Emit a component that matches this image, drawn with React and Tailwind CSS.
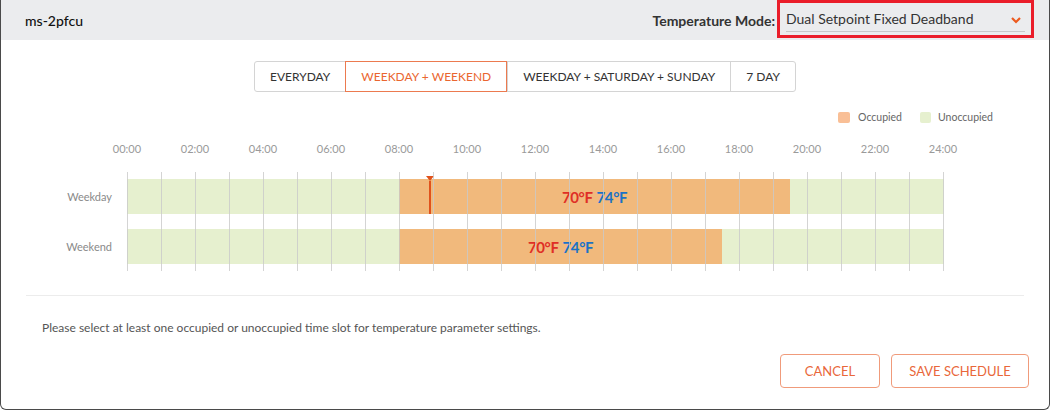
import React, { useState } from "react";

const HOUR = 34;
const TABS = ["EVERYDAY", "WEEKDAY + WEEKEND", "WEEKDAY + SATURDAY + SUNDAY", "7 DAY"];
const TICKS = ["00:00", "02:00", "04:00", "06:00", "08:00", "10:00", "12:00", "14:00", "16:00", "18:00", "20:00", "22:00", "24:00"];

const ROWS = [
  { label: "Weekday", start: 8, end: 19.5, marker: 8.9 },
  { label: "Weekend", start: 8, end: 17.5 },
];

function ScheduleBar({ row }) {
  const before = row.start * HOUR;
  const occupied = (row.end - row.start) * HOUR;
  return (
    <div className="relative flex h-[35px]">
      <div className="bg-[#e6f0cf]" style={{ width: before }} />
      <div
        className="flex items-center justify-center bg-[#f1b97c] text-[15px] font-bold tracking-tight"
        style={{ width: occupied }}
      >
        <span className="text-[#df2f26]">70°F</span>
        <span className="ml-1 text-[#1a72c6]">74°F</span>
      </div>
      <div className="flex-1 bg-[#e6f0cf]" />
      {row.marker && (
        <div
          className="absolute top-[-3px] bottom-0 flex flex-col items-center"
          style={{ left: row.marker * HOUR - 4 }}
        >
          <div className="h-0 w-0 border-x-[4px] border-t-[5px] border-x-transparent border-t-[#e0521c]" />
          <div className="w-[2px] flex-1 bg-[#e0521c]" />
        </div>
      )}
    </div>
  );
}

export default function App() {
  const [tab, setTab] = useState(1);

  return (
    <div className="h-[410px] w-[1050px] overflow-hidden rounded-b-md border-x border-b border-[#4a4a4a] bg-white font-['Lato','Open_Sans',sans-serif] text-[#333]">
      <div className="flex h-[40px] items-center justify-between bg-[#ebecee] pl-[24px] pr-[15px]">
        <span className="text-[14px] font-medium text-[#111]">ms-2pfcu</span>
        <div className="flex h-full items-start">
          <span className="mt-[10px] text-[14px] font-bold text-[#333]">Temperature Mode:</span>
          <div className="ml-[2px] h-[38px] w-[257px] border-[3px] border-[#ea1d2a] px-[6px] pt-[5px]">
            <div className="flex items-center justify-between border-b border-[#c8c8c8] pb-[2px] pr-[4px]">
              <span className="text-[14px] text-[#333]">Dual Setpoint Fixed Deadband</span>
              <svg width="10" height="7" viewBox="0 0 10 7" className="mt-[3px]">
                <path d="M1 1l4 4 4-4" fill="none" stroke="#ec5a1e" strokeWidth="2.2" />
              </svg>
            </div>
          </div>
        </div>
      </div>

      <div className="mt-[21px] flex justify-center">
        <div className="flex h-[31px] rounded-[3px] border border-[#d4d4d4]">
          {TABS.map((t, i) => (
            <button
              key={t}
              onClick={() => setTab(i)}
              className={
                i === tab
                  ? "-my-px border border-[#ec7a4f] px-[15px] text-[12px] text-[#ea6630]"
                  : "border-l border-[#d4d4d4] px-[15px] text-[12px] text-[#333] first:border-l-0"
              }
            >
              {t}
            </button>
          ))}
        </div>
      </div>

      <div className="mt-[18px] flex justify-end pr-[56px] text-[10.5px] text-[#666]">
        <div className="flex items-center gap-[8px]">
          <span className="h-[11px] w-[12px] rounded-[2px] bg-[#f9bf96]" />
          Occupied
        </div>
        <div className="ml-[18px] flex items-center gap-[7px]">
          <span className="h-[11px] w-[11px] rounded-[2px] bg-[#e6f0cf]" />
          Unoccupied
        </div>
      </div>

      <div className="mt-[15px] flex pl-[92px] text-[11px] text-[#9a9a9a]">
        {TICKS.map((t) => (
          <span key={t} className="w-[68px] text-center">
            {t}
          </span>
        ))}
      </div>

      <div className="mt-[15px] flex">
        <div className="flex w-[111px] flex-col gap-[15px] pt-[7px] text-right text-[11px] text-[#8a8a8a]">
          {ROWS.map((r) => (
            <div key={r.label} className="flex h-[35px] items-center justify-end">
              {r.label}
            </div>
          ))}
        </div>
        <div className="relative ml-[15px] w-[817px] py-[7px]">
          <div className="flex flex-col gap-[15px]">
            {ROWS.map((r) => (
              <ScheduleBar key={r.label} row={r} />
            ))}
          </div>
          <div className="pointer-events-none absolute inset-0 flex">
            {Array.from({ length: 24 }).map((_, i) => (
              <div key={i} className="w-[34px] border-l border-[#c9c9c9]/80" />
            ))}
            <div className="border-l border-[#c9c9c9]/80" />
          </div>
        </div>
      </div>

      <div className="mx-[25px] mt-[24px] border-t border-[#ececec]" />

      <p className="mt-[23px] pl-[41px] text-[12px] text-[#555]">
        Please select at least one occupied or unoccupied time slot for temperature parameter settings.
      </p>

      <div className="mt-[17px] flex justify-end gap-[11px] pr-[20px]">
        <button className="h-[34px] w-[100px] rounded-[4px] border border-[#f09b7b] text-[13px] text-[#e9673a]">
          CANCEL
        </button>
        <button className="h-[34px] w-[138px] rounded-[4px] border border-[#f09b7b] text-[13px] text-[#e9673a]">
          SAVE SCHEDULE
        </button>
      </div>
    </div>
  );
}
